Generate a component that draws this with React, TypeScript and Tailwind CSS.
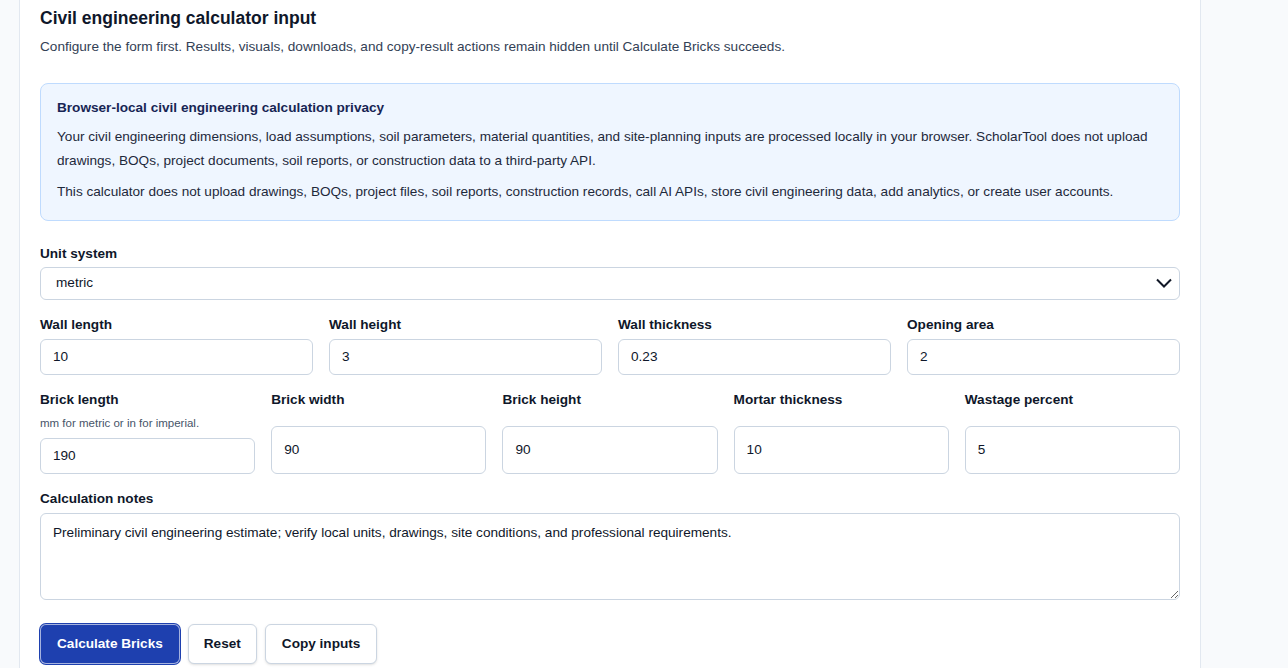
import { ChangeEvent, useState } from "react";

const font = { fontFamily: '"Liberation Sans", Arial, sans-serif' };

type Field = { id: string; label: string; value: string; hint?: string };

const rowOne: Field[] = [
  { id: "wallLength", label: "Wall length", value: "10" },
  { id: "wallHeight", label: "Wall height", value: "3" },
  { id: "wallThickness", label: "Wall thickness", value: "0.23" },
  { id: "openingArea", label: "Opening area", value: "2" },
];

const rowTwo: Field[] = [
  { id: "brickLength", label: "Brick length", value: "190", hint: "mm for metric or in for imperial." },
  { id: "brickWidth", label: "Brick width", value: "90" },
  { id: "brickHeight", label: "Brick height", value: "90" },
  { id: "mortar", label: "Mortar thickness", value: "10" },
  { id: "wastage", label: "Wastage percent", value: "5" },
];

const inputCls =
  "w-full rounded-md border border-[#cbd5e1] bg-white px-3 text-[13.6px] text-[#0f172a] outline-none";
const labelCls = "text-[13.6px] leading-[17px] font-bold text-[#0f172a]";

function NumberField({ field, values, onChange }: { field: Field; values: Record<string, string>; onChange: (e: ChangeEvent<HTMLInputElement>) => void }) {
  return (
    <div className="grid gap-[6px]">
      <label htmlFor={field.id} className={labelCls}>
        {field.label}
      </label>
      {field.hint && <p className="text-[11.5px] leading-[18px] text-[#475569]">{field.hint}</p>}
      <input id={field.id} name={field.id} value={values[field.id]} onChange={onChange} className={inputCls + " min-h-9"} />
    </div>
  );
}

export default function App() {
  const initial = Object.fromEntries([...rowOne, ...rowTwo].map((f) => [f.id, f.value]));
  const [values, setValues] = useState<Record<string, string>>(initial);
  const [notes, setNotes] = useState(
    "Preliminary civil engineering estimate; verify local units, drawings, site conditions, and professional requirements."
  );

  const onChange = (e: ChangeEvent<HTMLInputElement>) => setValues({ ...values, [e.target.name]: e.target.value });

  return (
    <div className="min-h-screen bg-[#f8fafc]" style={font}>
      <section className="ml-[19px] w-[1182px] border-x border-b border-[#e2e8f0] bg-white px-5 pt-[4px] pb-5">
        <h2 className="text-[17.5px] leading-7 font-bold text-[#0f172a]">Civil engineering calculator input</h2>
        <p className="mt-[5px] text-[13.6px] leading-5 text-[#334155]">
          Configure the form first. Results, visuals, downloads, and copy-result actions remain hidden until Calculate Bricks succeeds.
        </p>

        <div className="mt-[26px] rounded-lg border border-[#bfdbfe] bg-[#eff6ff] px-4 pt-[14px] pb-4">
          <h3 className="text-[13.6px] leading-5 font-bold text-[#172554]">Browser-local civil engineering calculation privacy</h3>
          <p className="mt-[7px] text-[13.6px] leading-6 text-[#1e293b]">
            Your civil engineering dimensions, load assumptions, soil parameters, material quantities, and site-planning inputs are processed locally in your browser. ScholarTool does not upload drawings, BOQs, project documents, soil reports, or construction data to a third-party API.
          </p>
          <p className="mt-[7px] text-[13.6px] leading-6 text-[#1e293b]">
            This calculator does not upload drawings, BOQs, project files, soil reports, construction records, call AI APIs, store civil engineering data, add analytics, or create user accounts.
          </p>
        </div>

        <form className="mt-6 flex flex-col gap-4" onSubmit={(e) => e.preventDefault()}>
          <div className="grid gap-[5px]">
            <label htmlFor="unit" className={labelCls}>Unit system</label>
            <div className="relative">
              <select id="unit" className={inputCls + " h-[33px] appearance-none pl-[15px]"} defaultValue="metric">
                <option value="metric">metric</option>
                <option value="imperial">imperial</option>
              </select>
              <svg className="pointer-events-none absolute top-[11px] right-[8px]" width="16" height="10" viewBox="0 0 16 10" fill="none">
                <path d="M1 1.5 8 8.5 15 1.5" stroke="#111827" strokeWidth="2" />
              </svg>
            </div>
          </div>

          <div className="grid grid-cols-4 gap-4">
            {rowOne.map((f) => (
              <NumberField key={f.id} field={f} values={values} onChange={onChange} />
            ))}
          </div>

          <div className="grid grid-cols-5 gap-4">
            {rowTwo.map((f) => (
              <NumberField key={f.id} field={f} values={values} onChange={onChange} />
            ))}
          </div>

          <div className="grid gap-[6px]">
            <label htmlFor="notes" className={labelCls}>Calculation notes</label>
            <textarea
              id="notes"
              value={notes}
              onChange={(e) => setNotes(e.target.value)}
              className="h-[87px] w-full rounded-md border border-[#cbd5e1] px-3 py-[9px] text-[13.6px] leading-5 text-[#0f172a] outline-none"
            />
          </div>

          <div className="mt-2 flex gap-2">
            <button type="submit" className="h-10 rounded-md border border-white/60 bg-[#1e40af] px-4 text-[13.6px] font-bold text-white ring-1 ring-[#1e40af]">
              Calculate Bricks
            </button>
            <button type="button" className="h-10 rounded-md border border-[#cbd5e1] bg-white px-[15px] text-[13.6px] font-bold text-[#0f172a] shadow-sm">
              Reset
            </button>
            <button type="button" className="h-10 rounded-md border border-[#cbd5e1] bg-white px-4 text-[13.6px] font-bold text-[#0f172a] shadow-sm">
              Copy inputs
            </button>
          </div>
        </form>
      </section>
    </div>
  );
}
